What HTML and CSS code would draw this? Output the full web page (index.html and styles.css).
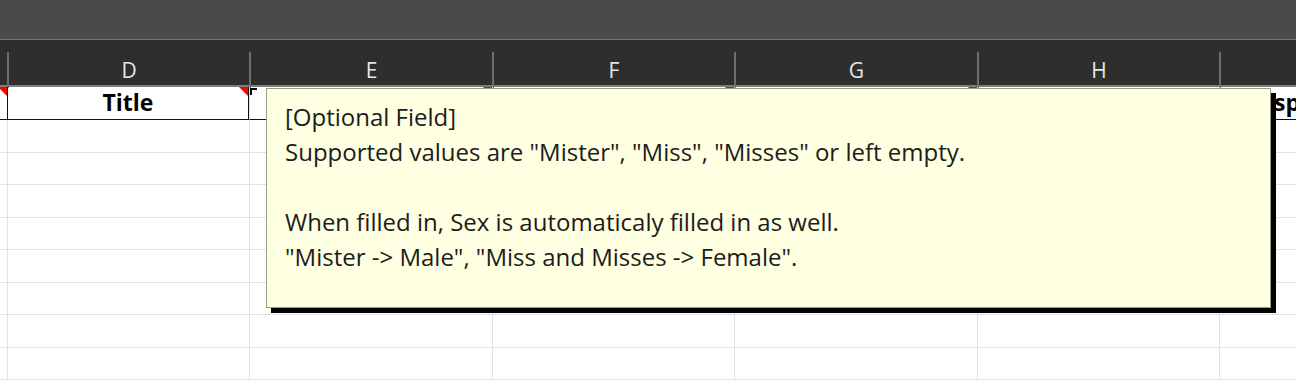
FILE: index.html
```html
<!DOCTYPE html>
<html lang="en">
<head>
    <meta charset="UTF-8">
    <title>Title comment</title>
    <link rel="stylesheet" href="styles.css">
</head>
<body>
    <!-- ribbon strip -->
    <div class="topbar"></div>

    <!-- column letters -->
    <div class="heads">
        <div class="head"></div>
        <div class="head">D</div>
        <div class="head">E</div>
        <div class="head">F</div>
        <div class="head">G</div>
        <div class="head">H</div>
        <div class="head"></div>
    </div>

    <!-- sheet -->
    <div class="sheet">
        <div class="row first">
            <div class="cell edge"><span class="mark"></span></div>
            <div class="cell title">Title<span class="mark"></span></div>
            <div class="cell"><span class="mark"></span></div>
            <div class="cell"><span class="mark"></span></div>
            <div class="cell"><span class="mark"></span></div>
            <div class="cell"></div>
            <div class="cell next">Display</div>
        </div>
        <div class="row"><div class="cell"></div><div class="cell"></div><div class="cell"></div><div class="cell"></div><div class="cell"></div><div class="cell"></div><div class="cell"></div></div>
        <div class="row"><div class="cell"></div><div class="cell"></div><div class="cell"></div><div class="cell"></div><div class="cell"></div><div class="cell"></div><div class="cell"></div></div>
        <div class="row"><div class="cell"></div><div class="cell"></div><div class="cell"></div><div class="cell"></div><div class="cell"></div><div class="cell"></div><div class="cell"></div></div>
        <div class="row"><div class="cell"></div><div class="cell"></div><div class="cell"></div><div class="cell"></div><div class="cell"></div><div class="cell"></div><div class="cell"></div></div>
        <div class="row"><div class="cell"></div><div class="cell"></div><div class="cell"></div><div class="cell"></div><div class="cell"></div><div class="cell"></div><div class="cell"></div></div>
        <div class="row"><div class="cell"></div><div class="cell"></div><div class="cell"></div><div class="cell"></div><div class="cell"></div><div class="cell"></div><div class="cell"></div></div>
        <div class="row"><div class="cell"></div><div class="cell"></div><div class="cell"></div><div class="cell"></div><div class="cell"></div><div class="cell"></div><div class="cell"></div></div>
        <div class="row"><div class="cell"></div><div class="cell"></div><div class="cell"></div><div class="cell"></div><div class="cell"></div><div class="cell"></div><div class="cell"></div></div>

        <!-- comment on D1 -->
        <span class="pointer"></span>
        <div class="comment">
            <p>[Optional Field]</p>
            <p>Supported values are "Mister", "Miss", "Misses" or left empty.</p>
            <p>&nbsp;</p>
            <p>When filled in, Sex is automaticaly filled in as well.</p>
            <p>"Mister -&gt; Male", "Miss and Misses -&gt; Female".</p>
        </div>
    </div>
</body>
</html>
```

FILE: styles.css
```css
body {
    margin: 0;
    font-family: "Open Sans", "Noto Sans", sans-serif;
    background: #fff;
    overflow: hidden;
}
.topbar {
    height: 39px;
    background: #4a4a4a;
    border-bottom: 1px solid #767676;
}
.heads {
    display: grid;
    grid-template-columns: 7px 242px 243px 242px 243px 242px 1fr;
    background: #2e2e2e;
    border-bottom: 2px solid #7c7c7c;
    box-sizing: border-box;
    height: 47px;
}
.head {
    margin-top: 12px;
    border-left: 2px solid #6e6e6e;
    color: #e6e6e6;
    font-size: 21px;
    text-align: center;
    line-height: 36px;
}
.head:first-child {
    border-left: none;
}
.sheet {
    position: relative;
}
.row {
    display: grid;
    grid-template-columns: 7px 242px 243px 242px 243px 242px 1fr;
    height: 32.5px;
}
.cell {
    position: relative;
    border-left: 1px solid #e1e1e1;
    border-bottom: 1px solid #e1e1e1;
}
.cell:first-child {
    border-left: none;
}
.row.first {
    height: 33px;
}
.row.first .cell {
    border-bottom: 1px solid #111;
    font-weight: bold;
    font-size: 23px;
    line-height: 31px;
    text-align: center;
    color: #000;
}
.row.first .title {
    border-left: 1px solid #111;
    border-right: 1px solid #111;
}
.row.first .next {
    text-align: left;
    text-indent: 30px;
    white-space: nowrap;
}
.mark {
    position: absolute;
    top: 0;
    right: 0;
    width: 0;
    height: 0;
    border-top: 9px solid #f00;
    border-left: 9px solid transparent;
}
.pointer {
    position: absolute;
    left: 250px;
    top: 1px;
    width: 5px;
    height: 5px;
    border-top: 2px solid #000;
    border-left: 2px solid #000;
}
.comment {
    position: absolute;
    left: 266px;
    top: 1px;
    width: 1005px;
    height: 220px;
    background: #ffffe1;
    border: 1px solid #9d9d86;
    box-shadow: 5px 5px 0 #000;
    padding: 10px 0 0 18px;
    box-sizing: border-box;
    color: #1c1c1c;
    font-size: 24px;
}
.comment p {
    margin: 0;
    line-height: 35px;
}
```
